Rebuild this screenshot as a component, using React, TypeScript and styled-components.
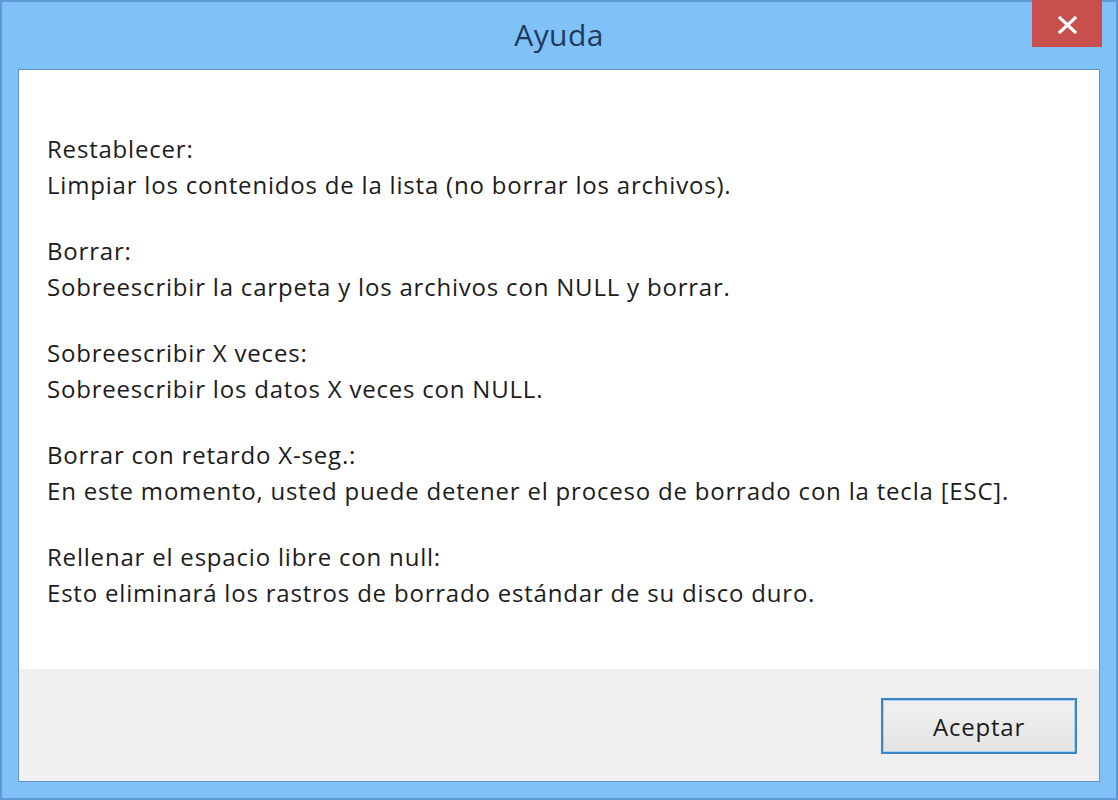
import styled, { createGlobalStyle } from "styled-components";

const GlobalStyle = createGlobalStyle`
  html, body {
    margin: 0;
    padding: 0;
    background: #7fc0f7;
  }
`;

const Window = styled.div`
  width: 1118px;
  height: 800px;
  box-sizing: border-box;
  background: #80c1f8;
  border: 2px solid #5d9ad6;
  display: flex;
  flex-direction: column;
  font-family: "Open Sans", "Noto Sans", sans-serif;
`;

const TitleBar = styled.div`
  height: 67px;
  flex: none;
  position: relative;
  display: flex;
  align-items: flex-start;
  justify-content: center;
`;

const Title = styled.div`
  margin-top: 12px;
  font-size: 30px;
  letter-spacing: 0.4px;
  color: #1e3b5c;
`;

const CloseButton = styled.button`
  position: absolute;
  top: -2px;
  right: 14px;
  width: 70px;
  height: 47px;
  border: none;
  background: #c84f4c;
  display: flex;
  align-items: center;
  justify-content: center;
  padding: 0;
  padding-top: 3px;
`;

const Client = styled.div`
  flex: 1;
  margin: 0 16px 16px 16px;
  border: 1px solid #5f95c8;
  display: flex;
  flex-direction: column;
  background: #ffffff;
`;

const Content = styled.div`
  flex: 1;
  padding: 61px 28px 0 28px;
`;

const Section = styled.p`
  margin: 0 0 31px 0;
  font-size: 24px;
  letter-spacing: 0.8px;
  line-height: 35.5px;
  color: #1c1c1c;
`;

const Footer = styled.div`
  height: 112px;
  flex: none;
  background: #f0f0f0;
  display: flex;
  justify-content: flex-end;
  align-items: flex-start;
  padding: 29px 22px 0 0;
  box-sizing: border-box;
`;

const OkButton = styled.button`
  width: 196px;
  height: 56px;
  box-sizing: border-box;
  border: 2px solid #3d86c6;
  box-shadow: inset 0 0 0 1px #a8d2f2;
  background: linear-gradient(#f0f0f0, #e4e4e4);
  font-family: "Open Sans", "Noto Sans", sans-serif;
  font-size: 24px;
  letter-spacing: 0.8px;
  color: #1c1c1c;
  padding: 0;
`;

const sections = [
  ["Restablecer:", "Limpiar los contenidos de la lista (no borrar los archivos)."],
  ["Borrar:", "Sobreescribir la carpeta y los archivos con NULL y borrar."],
  ["Sobreescribir X veces:", "Sobreescribir los datos X veces con NULL."],
  [
    "Borrar con retardo X-seg.:",
    "En este momento, usted puede detener el proceso de borrado con la tecla [ESC].",
  ],
  [
    "Rellenar el espacio libre con null:",
    "Esto eliminará los rastros de borrado estándar de su disco duro.",
  ],
];

const App = () => {
  return (
    <>
      <GlobalStyle />
      <Window>
        <TitleBar>
          <Title>Ayuda</Title>
          <CloseButton aria-label="Cerrar">
            <svg width="19" height="18" viewBox="0 0 19 18">
              <path
                d="M2 2 L17 16 M17 2 L2 16"
                stroke="#ffffff"
                strokeWidth="3.2"
                strokeLinecap="square"
              />
            </svg>
          </CloseButton>
        </TitleBar>
        <Client>
          <Content>
            {sections.map(([head, body]) => (
              <Section key={head}>
                {head}
                <br />
                {body}
              </Section>
            ))}
          </Content>
          <Footer>
            <OkButton>Aceptar</OkButton>
          </Footer>
        </Client>
      </Window>
    </>
  );
};

export default App;
